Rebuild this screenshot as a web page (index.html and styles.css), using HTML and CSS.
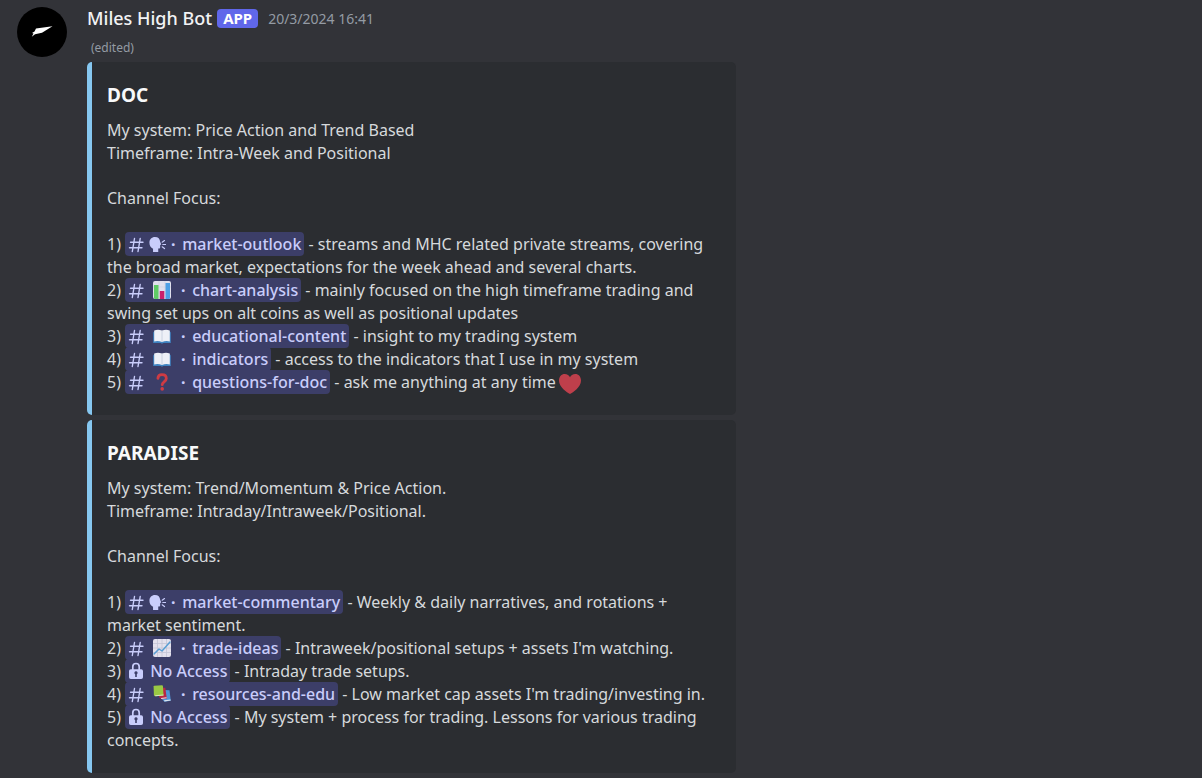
FILE: index.html
```
<!DOCTYPE html>
<html lang="en">
<head>
<meta charset="utf-8">
<title>Miles High Bot</title>
<link rel="stylesheet" href="styles.css">
</head>
<body>
<svg class="sprite" aria-hidden="true">
  <symbol id="hash" viewBox="0 0 16 16"><path d="M6.500 1.500 4.300 14.500M12.200 1.500 10 14.500M2.500 5.300h12.500M1.500 10.700H14" fill="none" stroke="currentColor" stroke-width="1.400" stroke-linecap="round"/></symbol>
  <symbol id="speak" viewBox="0 0 16 16"><path d="M5.600.9C8.700.9 10.400 2.800 10.500 5.500L11.500 7.900 10.500 8.500V10.500C10.500 11.600 10.100 11.900 8.700 11.800V15H3.800V12C1.700 11 .4 9 .4 6.300.4 3 2.600.9 5.600.9Z" fill="currentColor"/><path d="m12.400 5.800 2.200-1.500M13 8h2.700M12.400 10.200l2.200 1.600" stroke="currentColor" stroke-width="1.100" stroke-linecap="round"/></symbol>
  <symbol id="bars" viewBox="0 0 18 18"><rect width="18" height="18" rx="2" fill="#e1e0ee"/><path d="M0 6h18M0 12h18M6 0v18M12 0v18" stroke="#d0d0df" stroke-width=".7"/><path d="M1 4h4.500v14H2q-1 0-1-1Z" fill="#5fcb65"/><path d="M6.800 10h4.500v8H6.800Z" fill="#c9206b"/><path d="M12.500 2H17v15q0 1-1 1h-3.500Z" fill="#4e9fe5"/></symbol>
  <symbol id="trend" viewBox="0 0 18 18"><rect width="18" height="18" rx="2" fill="#e4e1ed"/><path d="M0 4.500h18M0 9h18M0 13.500h18M4.500 0v18M9 0v18M13.500 0v18" stroke="#c4c5d5" stroke-width=".8"/><path d="m1 15 5-5 3 2 8-9" fill="none" stroke="#5a9fd4" stroke-width="1.500" stroke-linecap="round" stroke-linejoin="round"/></symbol>
  <symbol id="book" viewBox="0 0 18 18"><path d="M.2 5.500 1.500 4h15l1.300 1.500V16h-7.500q-1.300 1-2.600 0H.2Z" fill="#3f83c1"/><path d="M1.200 3.500Q5 1.800 9 3.600q4-1.800 7.800-.1v10.900Q13 13.200 9 15q-4-1.800-7.800-.6Z" fill="#eef0f7"/><path d="M9 3.600V15" stroke="#c1cbdc" stroke-width=".8"/></symbol>
  <symbol id="question" viewBox="0 0 18 18"><path d="M4.900 5.400C5 2.900 6.700 1.600 9 1.600c2.500 0 4.300 1.500 4.300 3.800 0 3.300-4.100 3.500-4.100 6.300" fill="none" stroke="#cf3b43" stroke-width="2.800" stroke-linecap="round"/><circle cx="9.200" cy="15.900" r="1.800" fill="#cf3b43"/></symbol>
  <symbol id="books" viewBox="0 0 18 18"><path d="m11 5 5.500.2 1.300 10.600-6.300 1-2.500-2.500Z" fill="#4f94d8"/><path d="m11 15.300 6.500-.8.200 1-6.200.9Z" fill="#dce4ee"/><path d="m8 2.700 4.300.1 1.500 11-5.500.5L6 12Z" fill="#b92745"/><path d="m8 12.900 5.500-.6.200 1-5.400.6Z" fill="#e7ddeb"/><path d="M1.300.7 9 .3q.8 0 .9.800l.7 9.400-8 .8Q1 11.400.9 10L.6 1.600Q.6.800 1.300.7Z" fill="#9ac944"/><path d="m2 10.200 8.500-.7v1l-8 .7Z" fill="#d9e5c4"/></symbol>
  <symbol id="lock" viewBox="0 0 16 18"><path d="M4.800 8V4.700a3.200 3.200 0 0 1 6.400 0V8" fill="none" stroke="currentColor" stroke-width="1.700"/><path fill="currentColor" fill-rule="evenodd" d="M2.800 7.200h10.400Q15 7.200 15 9v6.200q0 1.800-1.800 1.800H2.800Q1 17 1 15.200V9Q1 7.200 2.800 7.200ZM8 9.200a1.600 1.600 0 0 0-.8 3V15h1.600v-2.800A1.600 1.600 0 0 0 8 9.200Z"/></symbol>
  <symbol id="heart" viewBox="0 0 24 22"><path d="M12 21C9 19.600 1 14 1 7.500 1 3.700 3.500 1 6.700 1 9.200 1 11.200 2.300 12 4.200 12.800 2.300 14.800 1 17.300 1 20.500 1 23 3.700 23 7.500 23 14 15 19.600 12 21Z" fill="#be3f4b"/></symbol>
</svg>
<main class="message">
  <svg class="avatar" viewBox="0 0 50 50" role="img" aria-label="Miles High Bot avatar"><circle cx="25" cy="25" r="25"/><path class="wing" d="M35.500 19.200 19 21.500 17.500 24.500 15 26l1.500.6-1.700 3.200 3.200-2.600 7-1.400Z"/></svg>
  <article class="body">
    <header class="head">
      <h1 class="name">Miles High Bot</h1>
      <span class="badge">APP</span>
      <time class="stamp" datetime="2024-03-20T16:41">20/3/2024 16:41</time>
    </header>
    <div class="edited">(edited)</div>
    <section class="embed">
      <h2 class="title">DOC</h2>
      <p class="text">My system: Price Action and Trend Based<br>Timeframe: Intra-Week and Positional</p>
      <p class="text">Channel Focus:</p>
      <p class="text channels">1) <a class="chip" href="#"><svg class="hash"><use href="#hash"/></svg><svg class="glyph"><use href="#speak"/></svg><span class="dot">·</span>market-outlook</a> - streams and MHC related private streams, covering<br>the broad market, expectations for the week ahead and several charts.<br>2) <a class="chip" href="#"><svg class="hash"><use href="#hash"/></svg><svg class="emoji"><use href="#bars"/></svg><span class="dot">·</span>chart-analysis</a> - mainly focused on the high timeframe trading and<br>swing set ups on alt coins as well as positional updates<br>3) <a class="chip" href="#"><svg class="hash"><use href="#hash"/></svg><svg class="emoji"><use href="#book"/></svg><span class="dot">·</span>educational-content</a> - insight to my trading system<br>4) <a class="chip" href="#"><svg class="hash"><use href="#hash"/></svg><svg class="emoji"><use href="#book"/></svg><span class="dot">·</span>indicators</a> - access to the indicators that I use in my system<br>5) <a class="chip" href="#"><svg class="hash"><use href="#hash"/></svg><svg class="emoji"><use href="#question"/></svg><span class="dot">·</span>questions-for-doc</a> - ask me anything at any time <svg class="heart" role="img" aria-label="heart"><use href="#heart"/></svg></p>
    </section>
    <section class="embed">
      <h2 class="title">PARADISE</h2>
      <p class="text">My system: Trend/Momentum &amp; Price Action.<br>Timeframe: Intraday/Intraweek/Positional.</p>
      <p class="text">Channel Focus:</p>
      <p class="text channels">1) <a class="chip" href="#"><svg class="hash"><use href="#hash"/></svg><svg class="glyph"><use href="#speak"/></svg><span class="dot">·</span>market-commentary</a> - Weekly &amp; daily narratives, and rotations +<br>market sentiment.<br>2) <a class="chip" href="#"><svg class="hash"><use href="#hash"/></svg><svg class="emoji"><use href="#trend"/></svg><span class="dot">·</span>trade-ideas</a> - Intraweek/positional setups + assets I'm watching.<br>3) <a class="chip" href="#"><svg class="lock"><use href="#lock"/></svg>No Access</a> - Intraday trade setups.<br>4) <a class="chip" href="#"><svg class="hash"><use href="#hash"/></svg><svg class="emoji"><use href="#books"/></svg><span class="dot">·</span>resources-and-edu</a> - Low market cap assets I'm trading/investing in.<br>5) <a class="chip" href="#"><svg class="lock"><use href="#lock"/></svg>No Access</a> - My system + process for trading. Lessons for various trading<br>concepts.</p>
    </section>
  </article>
</main>
</body>
</html>
```
FILE: styles.css
```
* { box-sizing: border-box; }
body { margin: 0; background: #323338; color: #d6d9dc; font-family: "Noto Sans", sans-serif; font-size: 16px; line-height: 23px; }
.sprite { position: absolute; width: 0; height: 0; }
.message { display: flex; align-items: flex-start; gap: 20px; padding: 7px 17px 5px; }
.avatar { flex: none; width: 50px; height: 50px; }
.avatar .wing { fill: #fff; }
.body { flex: 1; min-width: 0; }
.head { display: flex; align-items: center; gap: 5px; height: 22px; }
.name { margin: 0; font-size: 18px; font-weight: 500; color: #f2f3f5; }
.badge { padding: 0 6px; border-radius: 4px; background: #6067ea; color: #fff; font-size: 15px; font-weight: 700; line-height: 19px; }
.stamp { margin-left: 5px; color: #949ba4; font-size: 14px; }
.edited { padding: 8px 4px 3px; color: #949ba4; font-size: 12px; line-height: 22px; }
.embed { max-width: 649px; padding: 22px 15px 21px; border-left: 5px solid #86c7f0; border-radius: 5px; background: #2b2d31; }
.embed + .embed { margin-top: 5px; }
.title { margin: 0 0 13px; color: #f8f9fa; font-size: 19px; font-weight: 700; line-height: 22px; }
.text { margin: 0; }
.text + .text { margin-top: 22px; }
.text + .channels { margin-top: 23px; }
.chip { padding: 1px 3px; border-radius: 4px; background: #3c3e68; color: #c9cdfb; font-weight: 500; text-decoration: none; }
.chip svg { vertical-align: -3px; }
.hash { width: 16px; height: 16px; }
.glyph { width: 17px; height: 17px; margin: 0 -2px 0 5px; }
.emoji { width: 18px; height: 18px; margin: 0 3px 0 9px; }
.lock { width: 16px; height: 18px; margin-right: 6px; }
.dot { display: inline-block; width: 18px; text-align: center; font-weight: 700; }
.heart { width: 24px; height: 22px; margin: -6px 0 -6px -2px; vertical-align: -11px; }
.text .heart { vertical-align: middle; }
```
